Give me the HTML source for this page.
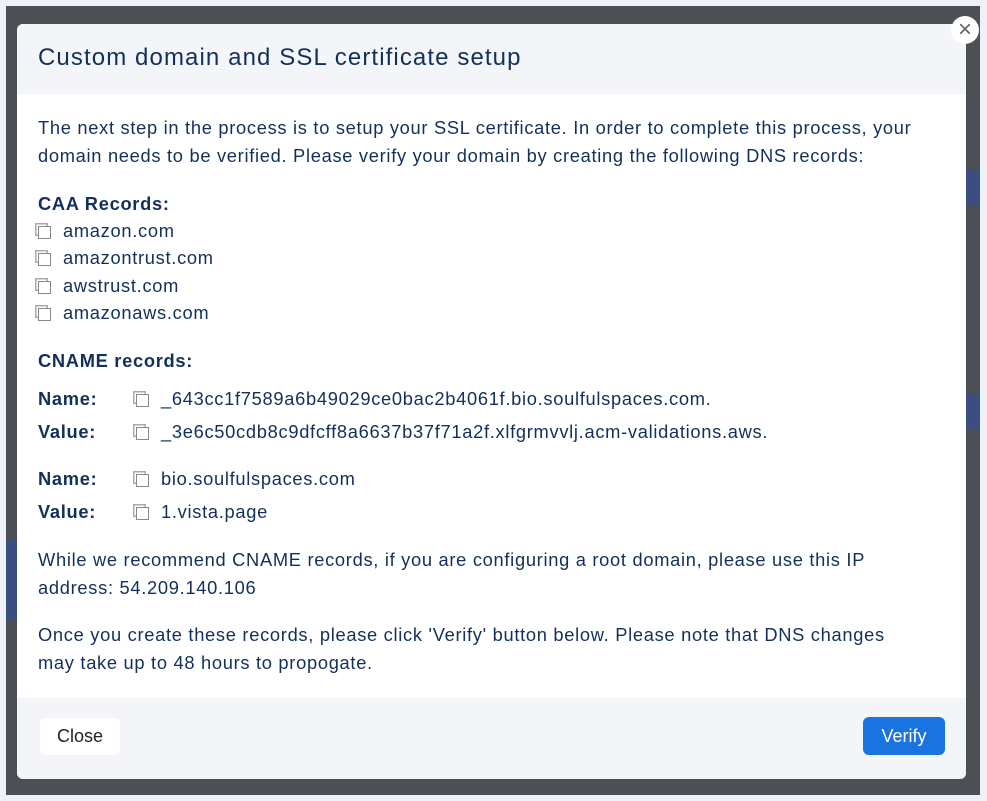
<!DOCTYPE html>
<html><head><meta charset="utf-8"><style>
body{margin:0;width:987px;height:801px;background:#eef2f8;position:relative;overflow:hidden;font-family:"Liberation Sans",sans-serif;color:#12305a}
.ov{position:absolute;left:6px;top:6px;width:974px;height:789px;background:#4c4f54}
.side{position:absolute;left:966px;top:170px;width:14px;height:36px;background:#3a4e80}
.side2{position:absolute;left:966px;top:393px;width:14px;height:36px;background:#3a4e80}
.side3{position:absolute;left:6px;top:540px;width:11px;height:80px;background:#3a4e80}
.m{position:absolute;left:17px;top:24px;width:949px;height:755px;background:#fff;border-radius:6px;overflow:hidden}
.h{height:70px;background:#f4f5f8}
.h h1{margin:0;position:absolute;left:21px;top:20px;font-size:24px;font-weight:normal;letter-spacing:1.1px}
.t{position:absolute;white-space:nowrap;font-size:18.3px;letter-spacing:.7px;margin-top:3px}
.cb{display:inline-block;width:11px;height:11px;border:1.5px solid #888;position:relative;top:2px;margin-right:12px;box-shadow:-3px -3px 0 -1.5px #fff,-3px -3px 0 0 #aaa}
.x{position:absolute;left:951px;top:16px;width:28px;height:28px;border-radius:50%;background:#fff;font-size:24px;line-height:27px;text-align:center;color:#666}
b{font-weight:bold}
</style></head><body>
<div class="ov"></div><div class="side"></div><div class="side2"></div><div class="side3"></div>
<div class="m">
<div class="h"><h1>Custom domain and SSL certificate setup</h1></div>
<div class="t" style="left:21px;top:90px">The next step in the process is to setup your SSL certificate. In order to complete this process, your</div>
<div class="t" style="left:21px;top:118px">domain needs to be verified. Please verify your domain by creating the following DNS records:</div>
<div class="t" style="left:21px;top:166px;font-weight:bold">CAA Records:</div>
<div class="t" style="left:21px;top:193px"><span class="cb"></span>amazon.com</div>
<div class="t" style="left:21px;top:220px"><span class="cb"></span>amazontrust.com</div>
<div class="t" style="left:21px;top:248px"><span class="cb"></span>awstrust.com</div>
<div class="t" style="left:21px;top:275px"><span class="cb"></span>amazonaws.com</div>
<div class="t" style="left:21px;top:323px;font-weight:bold">CNAME records:</div>
<div class="t" style="left:21px;top:361px;font-weight:bold">Name:</div>
<div class="t" style="left:119px;top:361px"><span class="cb"></span>_643cc1f7589a6b49029ce0bac2b4061f.bio.soulfulspaces.com.</div>
<div class="t" style="left:21px;top:394px;font-weight:bold">Value:</div>
<div class="t" style="left:119px;top:394px"><span class="cb"></span>_3e6c50cdb8c9dfcff8a6637b37f71a2f.xlfgrmvvlj.acm-validations.aws.</div>
<div class="t" style="left:21px;top:441px;font-weight:bold">Name:</div>
<div class="t" style="left:119px;top:441px"><span class="cb"></span>bio.soulfulspaces.com</div>
<div class="t" style="left:21px;top:474px;font-weight:bold">Value:</div>
<div class="t" style="left:119px;top:474px"><span class="cb"></span>1.vista.page</div>
<div class="t" style="left:21px;top:522px">While we recommend CNAME records, if you are configuring a root domain, please use this IP</div>
<div class="t" style="left:21px;top:550px">address: 54.209.140.106</div>
<div class="t" style="left:21px;top:597px">Once you create these records, please click 'Verify' button below. Please note that DNS changes</div>
<div class="t" style="left:21px;top:625px">may take up to 48 hours to propogate.</div>
<div style="position:absolute;left:0;top:674px;width:949px;height:81px;background:#f4f5f8">
<div style="position:absolute;left:23px;top:20px;width:80px;height:37px;background:#fff;border-radius:5px;font-size:18px;line-height:37px;text-align:center;color:#222">Close</div>
<div style="position:absolute;left:846px;top:19px;width:82px;height:38px;background:#1a74e0;border-radius:6px;font-size:18px;line-height:38px;text-align:center;color:#fff">Verify</div>
</div>
</div>
<div class="x">×</div>
</body></html>
